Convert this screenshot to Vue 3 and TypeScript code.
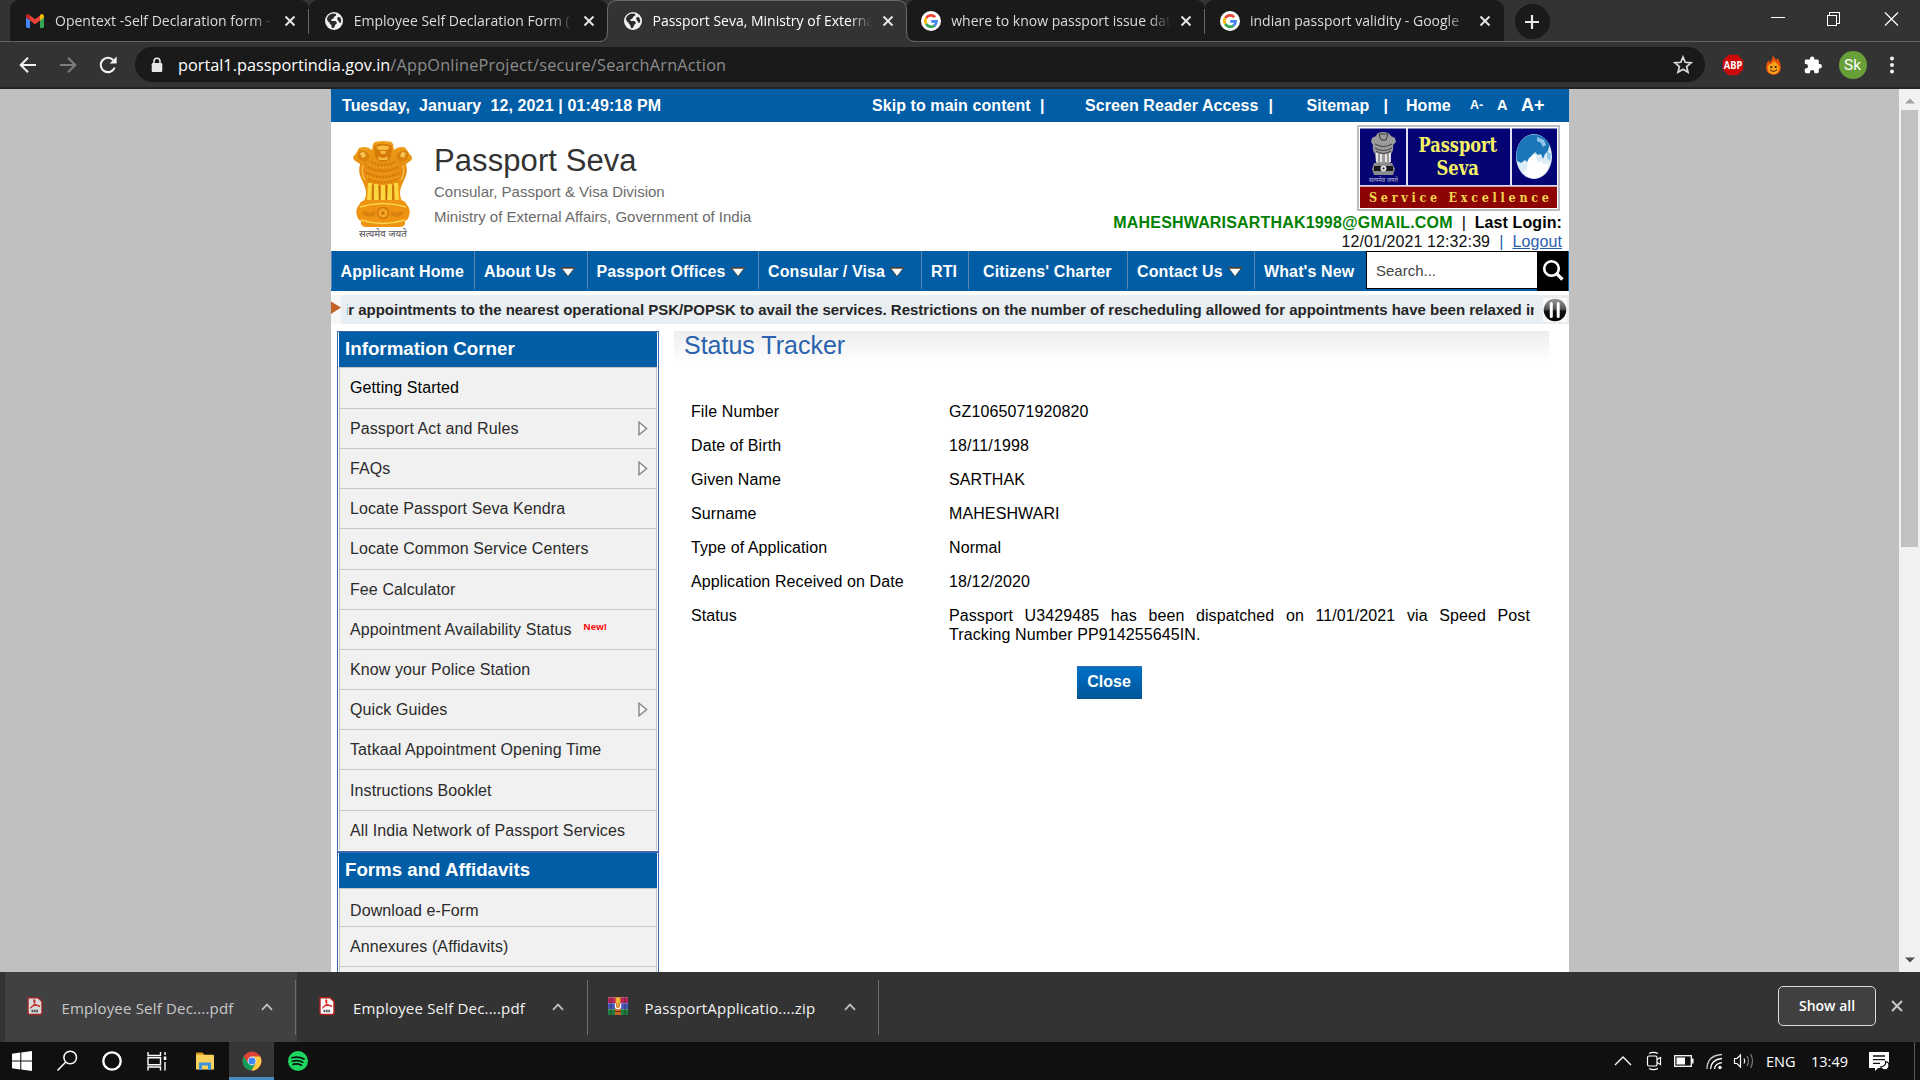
<script setup lang="ts">
interface Tab {
  title: string
  icon: 'gmail' | 'globe' | 'google'
  active?: boolean
  divider?: boolean
}
interface NavItem {
  label: string
  width: number
  pad: number
  menu?: boolean
}
interface SideItem {
  label: string
  arrow?: boolean
  isNew?: boolean
  dark?: boolean
}
interface Download {
  name: string
  kind: 'pdf' | 'zip'
  opened?: boolean
}

const tabs: Tab[] = [
  { title: 'Opentext -Self Declaration form -', icon: 'gmail', divider: true },
  { title: 'Employee Self Declaration Form (', icon: 'globe' },
  { title: 'Passport Seva, Ministry of Externa', icon: 'globe', active: true },
  { title: 'where to know passport issue dat', icon: 'google', divider: true },
  { title: 'indian passport validity - Google', icon: 'google' },
]

const nav: NavItem[] = [
  { label: 'Applicant Home', width: 143, pad: 8.5 },
  { label: 'About Us', width: 113, pad: 9, menu: true },
  { label: 'Passport Offices', width: 171, pad: 8.5, menu: true },
  { label: 'Consular / Visa', width: 163, pad: 9, menu: true },
  { label: 'RTI', width: 47, pad: 9 },
  { label: "Citizens' Charter", width: 159, pad: 14 },
  { label: 'Contact Us', width: 127, pad: 9, menu: true },
  { label: "What's New", width: 112, pad: 9 },
]

const infoItems: SideItem[] = [
  { label: 'Getting Started', dark: true },
  { label: 'Passport Act and Rules', arrow: true },
  { label: 'FAQs', arrow: true },
  { label: 'Locate Passport Seva Kendra' },
  { label: 'Locate Common Service Centers' },
  { label: 'Fee Calculator' },
  { label: 'Appointment Availability Status', isNew: true },
  { label: 'Know your Police Station' },
  { label: 'Quick Guides', arrow: true },
  { label: 'Tatkaal Appointment Opening Time' },
  { label: 'Instructions Booklet' },
  { label: 'All India Network of Passport Services' },
]

const details: [string, string][] = [
  ['File Number', 'GZ1065071920820'],
  ['Date of Birth', '18/11/1998'],
  ['Given Name', 'SARTHAK'],
  ['Surname', 'MAHESHWARI'],
  ['Type of Application', 'Normal'],
  ['Application Received on Date', '18/12/2020'],
]

const downloads: Download[] = [
  { name: 'Employee Self Dec....pdf', kind: 'pdf', opened: true },
  { name: 'Employee Self Dec....pdf', kind: 'pdf' },
  { name: 'PassportApplicatio....zip', kind: 'zip' },
]
</script>

<template>
  <div class="screen">
    <!-- tab strip -->
    <div class="tabstrip">
      <div v-for="(t, i) in tabs" :key="i" class="tab" :class="{ active: t.active, divider: t.divider }">
        <svg v-if="t.active" class="tab-shape" width="316" height="42" viewBox="0 0 316 42">
          <path d="M0 42V41.5Q8.500 41.500 8.500 32V10Q8.500 .5 18 .5H298Q307.500 .5 307.500 10V32Q307.500 41.500 316 41.500V42Z" fill="#333" />
          <path d="M0 41.500Q8.500 41.500 8.500 32V10Q8.500 .5 18 .5H298Q307.500 .5 307.500 10V32Q307.500 41.500 316 41.500" fill="none" stroke="#6b6b6b" />
        </svg>
        <svg v-if="t.icon === 'gmail'" class="tab-icon" width="20" height="20" viewBox="0 0 20 20">
          <path d="M1 5V15.600Q1 17 2.400 17H5V8Z" fill="#4285f4" />
          <path d="M19 5V15.600Q19 17 17.600 17H15V8Z" fill="#34a853" />
          <path d="M5 4.500L10 8.300L15 4.500V9.500L10 13.200L5 9.500Z" fill="#ea4335" />
          <path d="M1 5.500Q1 3 3 3Q3.700 3 5 4.200V9.500L1 6.500Z" fill="#c5221f" />
          <path d="M19 5.500Q19 3 17 3Q16.300 3 15 4.200V9.500L19 6.500Z" fill="#fbbc04" />
        </svg>
        <svg v-else-if="t.icon === 'globe'" class="tab-icon" width="20" height="20" viewBox="0 0 20 20">
          <circle cx="10" cy="10" r="9" fill="#f1f1f1" />
          <path d="M3 7Q4.500 3.800 7.500 2.800L11 2.500Q13 3.200 12 4.800Q10.500 5 9.800 6.500Q9.800 8 7.600 8.200Q6.500 9.800 8 10H11.500Q13.200 11 12.800 12.500Q11 13.200 10.800 15Q10 17.500 8.600 17.200Q7.200 16.400 7.300 14Q5.500 13.400 5.500 11.500Q3 10.500 3 7Z" fill="#2b2b2b" />
          <path d="M14 6Q16 5.500 16.600 7.200L17.300 10Q16.800 12.400 15.600 12Q15 10 13.800 9.400Q12.300 7.500 14 6Z" fill="#2b2b2b" />
        </svg>
        <svg v-else class="tab-icon" width="20" height="20" viewBox="0 0 20 20">
          <circle cx="10" cy="10" r="10" fill="#fff" />
          <g fill="none" stroke-width="2.700">
            <path d="M14.200 6.100A5.700 5.700 0 0 0 5.200 7" stroke="#ea4335" />
            <path d="M5.200 7A5.700 5.700 0 0 0 5.200 13" stroke="#fbbc05" />
            <path d="M5.200 13A5.700 5.700 0 0 0 13.600 14.500" stroke="#34a853" />
            <path d="M13.400 14.700A5.700 5.700 0 0 0 15.600 10.300H10.200" stroke="#4285f4" />
          </g>
        </svg>
        <span class="tab-title">{{ t.title }}</span>
        <svg class="tab-close" width="12" height="12" viewBox="0 0 12 12"><path d="M1.500 1.500L10.500 10.500M10.500 1.500L1.500 10.500" stroke="#e4e4e4" stroke-width="2" /></svg>
      </div>
      <div class="newtab">
        <svg width="14" height="14" viewBox="0 0 14 14"><path d="M7 0V14M0 7H14" stroke="#e8e8e8" stroke-width="2.200" /></svg>
      </div>
      <div class="winctl">
        <svg width="128" height="14" viewBox="0 0 128 14" fill="none" stroke="#fff" shape-rendering="crispEdges">
          <path d="M0 5.500H14" />
          <path d="M56.500 3.500H65.500V13.500H56.500ZM58.500 3V.5H68.500V11.500H66" />
          <path d="M114 .5L127 13.500M127 .5L114 13.500" shape-rendering="auto" stroke-width="1.200" />
        </svg>
      </div>
    </div>

    <!-- toolbar -->
    <div class="toolbar">
      <svg class="tb-back" width="18" height="18" viewBox="0 0 18 18" fill="none" stroke="#f2f2f2" stroke-width="2"><path d="M17 9H2M9 1.700L1.700 9L9 16.300" /></svg>
      <svg class="tb-fwd" width="18" height="18" viewBox="0 0 18 18" fill="none" stroke="#7d7d7d" stroke-width="2"><path d="M1 9H16M9 1.700L16.300 9L9 16.300" /></svg>
      <svg class="tb-reload" width="18" height="18" viewBox="0 0 18 18"><path d="M15.700 11.500A7.200 7.200 0 1 1 14.200 4" fill="none" stroke="#f2f2f2" stroke-width="2.100" /><path d="M17.600 .5V7.500H10.600Z" fill="#f2f2f2" /></svg>
      <div class="omnibox">
        <svg width="12" height="16" viewBox="0 0 12 16"><path d="M3 7V4.200A3 3 0 0 1 9 4.200V7" fill="none" stroke="#e8e8e8" stroke-width="1.600" /><rect x=".7" y="6" width="10.600" height="9" rx="1.200" fill="#e8e8e8" /></svg>
        <span class="url"><b>portal1.passportindia.gov.in</b>/AppOnlineProject/secure/SearchArnAction</span>
        <svg class="star" width="20" height="20" viewBox="0 0 20 20"><path d="M10 2L12.200 7.300L18 7.800L13.600 11.600L15 17.300L10 14.200L5 17.300L6.400 11.600L2 7.800L7.800 7.300Z" fill="none" stroke="#dadada" stroke-width="1.700" /></svg>
      </div>
      <div class="exts">
        <svg width="22" height="22" viewBox="0 0 22 22">
          <path d="M6.500 .8H15.500L21.200 6.500V15.500L15.500 21.200H6.500L.8 15.500V6.500Z" fill="#cc0a0a" />
          <text x="11" y="14.600" text-anchor="middle" textLength="18.500" lengthAdjust="spacingAndGlyphs" font-family="Open Sans, sans-serif" font-weight="700" font-size="10" fill="#fff">ABP</text>
        </svg>
        <svg width="22" height="22" viewBox="0 0 22 22">
          <path d="M10 1Q11 4 13.500 6Q14.500 5 14.500 4Q18 9 18 13.500Q17.500 20.500 10.500 21Q3.500 20.500 3 13.500Q3 9.500 5.500 6Q6 8 7 8.500Q10 5 10 1Z" fill="#e8500a" />
          <path d="M10.500 7Q16 10 16.500 14.500Q15.500 20 10.500 20Q5.500 20 4.500 14.500Q5 10.500 7 10Q9.500 10 10.500 7Z" fill="#f8a21c" />
          <circle cx="8.300" cy="13" r="1.100" fill="#3a1c00" /><circle cx="12.700" cy="13" r="1.100" fill="#3a1c00" />
          <path d="M7 15.700Q10.500 19 14 15.700" fill="none" stroke="#3a1c00" />
        </svg>
        <svg width="20" height="20" viewBox="0 0 20 20"><path d="M7 3.800A2.200 2.200 0 0 1 11.400 3.800V4.600H14.400Q15.800 4.600 15.800 6V9H16.700A2.200 2.200 0 0 1 16.700 13.400H15.800V16.800Q15.800 18.200 14.400 18.200H11.400V17.200A2.200 2.200 0 0 0 7 17.200V18.200H3.200Q1.800 18.200 1.800 16.800V13.400H2.800A2.200 2.200 0 0 0 2.800 9H1.800V6Q1.800 4.600 3.200 4.600H7Z" fill="#fff" /></svg>
        <span class="avatar">Sk</span>
        <svg width="4" height="18" viewBox="0 0 4 18" fill="#f2f2f2"><circle cx="2" cy="2.500" r="2" /><circle cx="2" cy="9" r="2" /><circle cx="2" cy="15.500" r="2" /></svg>
      </div>
    </div>

    <!-- web page -->
    <div class="viewport">
      <div class="page">
        <div class="topbar">
          <span class="date">Tuesday,&nbsp; January&nbsp; 12, 2021 | 01:49:18 PM</span>
          <span>Skip to main content</span><span>|</span>
          <span>Screen Reader Access</span><span>|</span>
          <span>Sitemap</span><span>|</span>
          <span>Home</span>
          <span class="a-small">A-</span><span class="a-mid">A</span><span class="a-big">A+</span>
        </div>

        <header class="header">
          <svg class="emblem" width="64" height="102" viewBox="0 0 64 102">
            <defs>
              <linearGradient id="gold" x1="0" x2="0" y1="0" y2="1"><stop offset="0" stop-color="#f0a01c" /><stop offset=".5" stop-color="#e58a0e" /><stop offset="1" stop-color="#ef9a10" /></linearGradient>
            </defs>
            <path d="M22 4Q23 1 27 1.500L32 1L38 1.500Q41 1 42 4L43 10Q47 6 54 7.500Q57 12 61 17L60.500 20L55 24Q57 32 54 38Q51 44 49.500 49Q48 55 51 61H13Q16 55 14.500 49Q13 44 10 38Q7 32 9 24L3 20L2 17Q6 13 8 8Q16 5 21 10Z" fill="url(#gold)" />
            <path d="M23 6Q32 1 41 6L40 16Q37 22 32 22Q27 22 24 16Z" fill="#d67a0a" />
            <path d="M25 7Q32 4 39 7L36 10H28ZM29 11H35L34 14H30ZM27 16Q32 20 37 16L36 20H28Z" fill="#f7bb40" />
            <path d="M7 12Q12 9 17 13Q20 17 16 21Q10 22 7 18ZM57 12Q52 9 47 13Q44 17 48 21Q54 22 57 18Z" fill="#d9820f" />
            <path d="M9 13L13 12L15 16L11 18ZM55 13L51 12L49 16L53 18Z" fill="#f7c556" />
            <path d="M20 22Q32 28 44 22M17 27Q32 35 47 27M16 33Q32 41 48 33M17 39Q32 46 47 39" fill="none" stroke="#cf760a" stroke-width="1.500" stroke-dasharray="2 1.200" />
            <path d="M18 24.500Q32 31 46 24.500M16 30Q32 38 48 30M16 36Q32 43.500 48 36" fill="none" stroke="#f9b63c" stroke-width="1" stroke-dasharray="1.500 2" />
            <path d="M12 25Q10 33 14 40M52 25Q54 33 50 40" fill="none" stroke="#f8bd4a" stroke-width="1.500" />
            <path d="M17 43H21L20 61H16ZM23 44H27L28 61H23ZM30 45H34V61H30ZM37 44H41L41 61H36ZM43 43H47L48 61H44Z" fill="#fbd63c" />
            <path d="M22 45V60M28.500 46V60M35.500 46V60M42 45V60" stroke="#b8640a" stroke-width="1.200" />
            <path d="M8 65Q10 60 16 60H48Q54 60 56 65Q60 69 58 76Q57 80 54 81V84Q53 87 48 87H16Q11 87 10 84V81Q7 80 6 76Q4 69 8 65Z" fill="#ee9412" />
            <path d="M9 67Q32 60 55 67M10 80Q32 87 54 80" fill="none" stroke="#fbd650" stroke-width="1.500" />
            <circle cx="32" cy="73" r="5.500" fill="#f3a424" stroke="#cf760a" stroke-width="1.500" /><circle cx="32" cy="73" r="1.600" fill="#c46a05" />
            <path d="M11 74Q14 69 17 73L24 71V76L17 77ZM53 74Q50 69 47 73L40 71V76L47 77Z" fill="#d9820f" />
            <text x="32" y="97" text-anchor="middle" textLength="48" lengthAdjust="spacingAndGlyphs" font-family="Noto Sans, Noto Sans Devanagari, sans-serif" font-size="10" font-weight="500" fill="#666">सत्यमेव जयते</text>
          </svg>
          <div class="brand">
            <h1>Passport Seva</h1>
            <p>Consular, Passport &amp; Visa Division</p>
            <p>Ministry of External Affairs, Government of India</p>
          </div>
          <div class="account">
            <svg class="logo" width="204" height="87" viewBox="0 0 204 87">
              <rect x="1" y="1" width="201" height="84" fill="#fff" stroke="#bdbdc4" stroke-width="2" />
              <rect x="3" y="3.500" width="46" height="56.500" fill="#040475" /><rect x="51" y="3.500" width="102" height="56.500" fill="#040475" /><rect x="155" y="3.500" width="45" height="56.500" fill="#040475" />
              <rect x="3" y="61.500" width="197" height="21.500" fill="#8e0303" />
              <path d="M49.900 3.500V60M153.900 3.500V60M3 60.800H200" stroke="#c9c9e8" stroke-width="1.200" />
              <path d="M19 11Q20 7 26 7Q32 7 34 11L38 13L39 17L36 20Q37 25 34 29L33 38H19L18 29Q15 25 16 20L14 17L15 13Z" fill="#9b9b9b" />
              <path d="M22 9H31L29 15H24ZM18 19Q26 24 35 19M18 23Q26 28 35 23M19 26Q26 31 34 26" fill="none" stroke="#3d3d44" />
              <path d="M20 28V37M24 29V37M29 29V37M33 28V37" stroke="#eee" stroke-width="1.800" />
              <path d="M17 38H35L38 44L36 50H17L15 44Z" fill="#8a8a8a" /><path d="M17 41H36V46H17Z" fill="#16161c" /><circle cx="26.500" cy="43.500" r="3" fill="#ddd" /><circle cx="26.500" cy="43.500" r="1" fill="#222" />
              <text x="12" y="57" textLength="29" lengthAdjust="spacingAndGlyphs" font-family="Noto Sans, Noto Sans Devanagari, sans-serif" font-size="6" fill="#b5b5cf">सत्यमेव जयते</text>
              <text x="61.500" y="27" textLength="78.500" lengthAdjust="spacingAndGlyphs" class="logo-name">Passport</text>
              <text x="79.500" y="50" textLength="42.500" lengthAdjust="spacingAndGlyphs" class="logo-name">Seva</text>
              <ellipse cx="177" cy="31.500" rx="18" ry="22.500" fill="#dcedf8" />
              <path d="M162 19Q167 9.500 178 9.500Q188 10.500 192.500 20L191 26L188 29L186 34L184 29L181 30L178 27L176 30L172 33L170 37L168 35L164 38L160 36Q158 27 162 19Z" fill="#1c77b8" />
              <path d="M176 29L179 31L181 38L184 36L187 40L190 38L192 41Q187 53 177 53.500Q170 53 166 47L170 44L171 36Z" fill="#fff" />
              <path d="M180 12L187 15L189 20L186 22L184 18L180 16ZM190 26L194 29L193 36L190 33Z" fill="#8fc4e6" />
              <text x="12" y="76.700" textLength="180" class="logo-tag">Service Excellence</text>
            </svg>
            <div class="login-1"><b class="mail">MAHESHWARISARTHAK1998@GMAIL.COM</b>&nbsp; | &nbsp;<b class="last-login">Last Login:</b></div>
            <div class="login-2">12/01/2021 12:32:39&nbsp; <i>|</i> &nbsp;<u>Logout</u></div>
          </div>
        </header>

        <nav class="nav">
          <div v-for="n in nav" :key="n.label" class="nav-item" :style="{ width: n.width + 'px', paddingLeft: n.pad + 'px' }">
            {{ n.label }}
            <svg v-if="n.menu" width="14" height="11" viewBox="0 0 14 11"><path d="M.5 1H13.500L7 9.500Z" fill="#fff" stroke="#4d4433" stroke-width=".9" /><path d="M0 .8H14" stroke="#4a4235" stroke-width="1.400" /></svg>
          </div>
          <div class="search">Search...</div>
          <div class="search-btn">
            <svg width="24" height="24" viewBox="0 0 24 24" fill="none" stroke="#fff"><circle cx="10.500" cy="10.500" r="7.300" stroke-width="2.600" /><path d="M15.800 15.800L21.500 21.500" stroke-width="3.200" /></svg>
          </div>
        </nav>

        <div class="ticker">
          <svg width="10" height="29" viewBox="0 0 10 29"><path d="M0 6.500L10 12.500L0 19Z" fill="#c4622a" /></svg>
          <div class="ticker-box">
            <div class="ticker-clip"><span>ir appointments to the nearest operational PSK/POPSK to avail the services. Restrictions on the number of rescheduling allowed for appointments have been relaxed in</span></div>
            <svg width="24" height="24" viewBox="0 0 24 24">
              <defs><linearGradient id="knob" x1="0" x2="0" y1="0" y2="1"><stop offset="0" stop-color="#999" /><stop offset=".45" stop-color="#555" /><stop offset=".55" stop-color="#111" /><stop offset="1" stop-color="#000" /></linearGradient></defs>
              <rect width="24" height="24" fill="#fbfbfb" /><circle cx="12" cy="12" r="11.300" fill="url(#knob)" /><path d="M8.300 5.500V18.500M15.200 5.500V18.500" stroke="#fff" stroke-width="3" stroke-linecap="round" />
            </svg>
          </div>
        </div>

        <div class="body">
          <aside class="side">
            <section class="panel">
              <h2>Information Corner</h2>
              <ul>
                <li v-for="it in infoItems" :key="it.label" :class="{ dark: it.dark }">
                  <span>{{ it.label }}</span><em v-if="it.isNew">New!</em>
                  <svg v-if="it.arrow" class="li-arrow" width="10" height="15" viewBox="0 0 10 15"><path d="M1 1.200L8.600 7.500L1 13.800Z" fill="#fcfcfc" stroke="#858585" stroke-width="1.400" /></svg>
                </li>
              </ul>
            </section>
            <section class="panel">
              <h2 class="forms-title">Forms and Affidavits</h2>
              <ul>
                <li class="short"><span>Download e-Form</span></li>
                <li class="last"><span>Annexures (Affidavits)</span></li>
                <li></li>
              </ul>
            </section>
          </aside>

          <main class="main">
            <h2 class="title">Status Tracker</h2>
            <dl>
              <template v-for="d in details" :key="d[0]"><dt>{{ d[0] }}</dt><dd>{{ d[1] }}</dd></template>
              <dt>Status</dt>
              <dd>
                <span class="full">Passport U3429485 has been dispatched on 11/01/2021 via Speed Post</span>
                Tracking Number PP914255645IN.
              </dd>
            </dl>
            <button class="close" type="button">Close</button>
          </main>
        </div>
      </div>

      <div class="scroll">
        <svg width="10" height="6" viewBox="0 0 10 6"><path d="M0 5.500L5 .5L10 5.500Z" fill="#a3a3a3" /></svg>
        <div class="thumb"></div>
        <svg width="10" height="6" viewBox="0 0 10 6"><path d="M0 .5H10L5 5.500Z" fill="#505050" /></svg>
      </div>
    </div>

    <!-- download shelf -->
    <div class="shelf">
      <div v-for="(d, i) in downloads" :key="i" class="dl" :class="{ opened: d.opened }">
        <svg v-if="d.kind === 'pdf'" class="dl-icon" width="20" height="20" viewBox="0 0 20 20">
          <path d="M3 1.700H13L17 5.500V16.500Q17 18.500 15 18.500H5Q3 18.500 3 16.500Z" fill="#fff" stroke="#b3201c" stroke-width="1.400" />
          <path d="M6 11.500Q10.500 8.500 9.700 4.500Q9 3 8.700 5Q9.500 9 14.500 10.500Q15 9 10 9.500Q6.500 10 6 11.500Z" fill="none" stroke="#e02a22" stroke-width="1.200" />
          <path d="M6.500 15H13.500" stroke="#555" stroke-width="2.400" stroke-dasharray="1.800 .6" />
        </svg>
        <svg v-else class="dl-icon" width="20" height="20" viewBox="0 0 20 20">
          <rect y="1" width="20" height="6" fill="#b5265f" /><rect y="7" width="20" height="6" fill="#4a55b8" /><rect y="13" width="20" height="6" fill="#1d7d3c" />
          <path d="M0 1.500H20M0 7.500H20M0 13.500H20" stroke="#fff" stroke-opacity=".25" />
          <path d="M3 1V19M17 1V19" stroke="#222" stroke-opacity=".5" />
          <rect x="7" y="1" width="6" height="18" fill="#c9662a" /><rect x="8" y="1.500" width="4" height="6" fill="#f0b73a" />
          <path d="M7.500 7.500V11.500Q10 14 12.500 11.500V7.500" fill="none" stroke="#fff" stroke-width="1.300" /><path d="M9.300 8V11.500H10.700V8" fill="#e8c33a" /><path d="M7 15.500H13" stroke="#6b2b10" />
        </svg>
        <span>{{ d.name }}</span>
        <svg class="dl-caret" width="12" height="8" viewBox="0 0 12 8"><path d="M1 6.800L6 1.600L11 6.800" fill="none" stroke="#c3c3c3" stroke-width="1.700" /></svg>
      </div>
      <div class="showall">Show all</div>
      <svg class="shelf-x" width="12" height="12" viewBox="0 0 12 12"><path d="M1 1L11 11M11 1L1 11" stroke="#c8c8c8" stroke-width="2" /></svg>
    </div>

    <!-- taskbar -->
    <div class="taskbar">
      <div class="cell start"><svg width="20" height="20" viewBox="0 0 20 20" fill="#fff"><path d="M0 2.800L8.300 1.600V9.500H0ZM9.300 1.500L20 0V9.500H9.300ZM0 10.500H8.300V18.400L0 17.200ZM9.300 10.500H20V20L9.300 18.500Z" /></svg></div>
      <div class="cell"><svg width="22" height="22" viewBox="0 0 22 22" fill="none" stroke="#fff" stroke-width="1.500"><circle cx="14.200" cy="7.500" r="6.300" /><path d="M9.800 12L1.500 20.500" /></svg></div>
      <div class="cell"><svg width="22" height="22" viewBox="0 0 22 22"><circle cx="11" cy="11" r="8.700" fill="none" stroke="#fff" stroke-width="2.300" /></svg></div>
      <div class="cell"><svg width="22" height="22" viewBox="0 0 22 22" fill="none" stroke="#fff" stroke-width="1.400"><path d="M2 2V5.500H14.500V2M2 20.500V17H14.500V20.500M2 7.700H14.500V14.800H2ZM19 2V5M19 12V20.500" /><path d="M19 6.500V10" stroke-width="2.600" /></svg></div>
      <div class="cell shift"><svg width="20" height="20" viewBox="0 0 20 20"><path d="M1 2.500Q1 1.500 2 1.500H7.500L9.500 4H1Z" fill="#d99a1c" /><path d="M1 3.800H18Q19 3.800 19 5V18.500H1Z" fill="#fcd15b" /><path d="M4 19V11.500H16V19H13V14.500H7V19Z" fill="#3d92d8" /></svg></div>
      <div class="cell current"><svg width="20" height="20" viewBox="0 0 20 20">
        <circle cx="10" cy="10" r="9.500" fill="#db4437" /><path d="M1.800 5.200A9.500 9.500 0 0 0 9.500 19.500L13.800 12.200L6.200 12.200Z" fill="#0f9d58" /><path d="M18.200 5.500H10L13.900 12.200L9.500 19.500A9.500 9.500 0 0 0 18.200 5.500Z" fill="#ffcd40" /><circle cx="10" cy="10" r="4.400" fill="#f1f1f1" /><circle cx="10" cy="10" r="3.500" fill="#4285f4" />
      </svg></div>
      <div class="cell spot"><svg width="22" height="22" viewBox="0 0 22 22"><circle cx="11" cy="11" r="10" fill="#1ed760" /><path d="M5 7.800Q11.500 6 17 9M5.500 11.200Q11 9.800 15.800 12.200M6 14.300Q10.500 13.300 14.500 15.200" fill="none" stroke="#101010" stroke-width="1.700" stroke-linecap="round" /></svg></div>
      <div class="tray">
        <svg width="18" height="10" viewBox="0 0 18 10" fill="none" stroke="#fff" stroke-width="1.300"><path d="M1 9L9 1L17 9" /></svg>
        <svg class="t-cam" width="16" height="20" viewBox="0 0 16 20" fill="none" stroke="#fff" stroke-width="1.200"><rect x="1.500" y="5" width="9.500" height="10" rx="1.500" /><path d="M11 8.500L14.500 6.500V13.500L11 11.500M3 2.500Q7.500 .2 12 2.500M3 17.500Q7.500 19.800 12 17.500" /></svg>
        <svg class="t-bat" width="20" height="12" viewBox="0 0 20 12"><rect x=".7" y=".7" width="16.600" height="10.600" fill="none" stroke="#fff" stroke-width="1.300" /><rect x="2.500" y="2.500" width="8.500" height="7" fill="#fff" /><path d="M18.800 3.500V8.500" stroke="#fff" stroke-width="1.500" /></svg>
        <svg class="t-wifi" width="17" height="17" viewBox="0 0 17 17" fill="none" stroke="#fff" stroke-width="1.300"><path d="M1 16Q1 2.500 16 1.500" stroke-opacity=".75" /><path d="M4.500 16Q5 6.500 16 5.500" /><path d="M8.500 16Q9 10.500 16 9.700" /><circle cx="14" cy="14.500" r="1.700" fill="#fff" stroke="none" /></svg>
        <svg class="t-vol" width="22" height="18" viewBox="0 0 22 18" fill="none" stroke="#fff" stroke-width="1.200"><path d="M1.500 6.500H4L7.500 3V15L4 11.500H1.500Z" /><path d="M11 6.500Q12.500 9 11 11.500" /><path d="M14 4Q17 9 14 14M17.500 2Q21.500 9 17.500 16" stroke-opacity=".45" /></svg>
        <span class="lang">ENG</span>
        <span class="clock">13:49</span>
        <svg class="t-note" width="21" height="21" viewBox="0 0 21 21"><path d="M0 1H20V17H9L6 20V17H0Z" fill="#fff" /><path d="M4 5H16M4 8.700H16M4 12.300H11" stroke="#101010" stroke-width="1.300" /><path d="M16.500 10.500Q17.500 15 11.500 16Q14 20 18 18.500Q21.500 15.500 19 11.500Z" fill="#fff" stroke="#101010" stroke-width="1.200" /></svg>
        <div class="peek"></div>
      </div>
    </div>
  </div>
</template>

<style>
html,
body {
  margin: 0;
  background: #101010;
  overflow: hidden;
}
</style>

<style scoped>
* {
  box-sizing: border-box;
}
svg {
  display: block;
  flex: none;
}
.screen {
  width: 1920px;
  height: 1080px;
  display: flex;
  flex-direction: column;
  overflow: hidden;
  font-family: "Liberation Sans", Arial, sans-serif;
}

/* tab strip */
.tabstrip {
  display: flex;
  height: 42px;
  padding-left: 10px;
  background: #333;
  border-bottom: 1px solid #626262;
  font-family: "Open Sans", "Noto Sans", sans-serif;
}
.tab {
  position: relative;
  display: flex;
  align-items: center;
  width: 298.750px;
  height: 41px;
  padding: 0 13px 7px 15px;
  background: #1a1a1a;
  border-radius: 9px 9px 0 0;
}
.tab.active {
  background: none;
  z-index: 1;
}
.tab-shape {
  position: absolute;
  left: -9px;
  top: 0;
}
.tab.divider::after {
  content: "";
  position: absolute;
  right: 0;
  top: 9px;
  width: 1px;
  height: 25px;
  background: #666;
}
.tab-icon {
  position: relative;
  margin-top: 8px;
}
.tab-title {
  position: relative;
  width: 222px;
  margin: 7px 0 0 10px;
  white-space: nowrap;
  font-size: 14px;
  line-height: 22px;
  color: #dcdcdc;
  -webkit-mask-image: linear-gradient(90deg, #000 89%, transparent 99%);
  mask-image: linear-gradient(90deg, #000 89%, transparent 99%);
}
.tab.active .tab-title {
  color: #fff;
}
.tab-close {
  position: relative;
  margin: 7px 0 0 7.500px;
}
.newtab {
  display: flex;
  align-items: center;
  justify-content: center;
  width: 35px;
  height: 35px;
  margin: 4px 0 0 11px;
  border-radius: 50%;
  background: #1a1a1a;
}
.winctl {
  margin: 12px 0 0 221px;
}

/* toolbar */
.toolbar {
  display: flex;
  align-items: center;
  height: 47px;
  padding: 0 0 0 19px;
  background: #333;
  border-bottom: 2px solid #242424;
}
.tb-fwd {
  margin-left: 22px;
}
.tb-reload {
  margin-left: 22px;
}
.omnibox {
  display: flex;
  align-items: center;
  width: 1570px;
  height: 35px;
  margin-left: 18px;
  padding: 0 12px 0 16px;
  border-radius: 18px;
  background: #1a1a1a;
}
.url {
  flex: 1;
  margin: 0 0 0 15px;
  font: 16.300px/24px "Open Sans", "Noto Sans", sans-serif;
  letter-spacing: 0.200px;
  color: #8c8c8c;
}
.url b {
  font-weight: 400;
  letter-spacing: 0;
  color: #fff;
}
.exts {
  display: grid;
  grid-template-columns: 41px 40px 36px 51px 10px;
  align-items: center;
  margin-left: 16.500px;
}
.avatar {
  width: 28px;
  height: 28px;
  border-radius: 50%;
  background: #689f38;
  color: #fff;
  font: 15.500px/28px Roboto, sans-serif;
  text-align: center;
}

/* page */
.viewport {
  display: flex;
  height: 883px;
  background: #c0c0c0;
  overflow: hidden;
}
.page {
  width: 1238px;
  height: 883px;
  margin-left: 331px;
  background: #fff;
  overflow: hidden;
}
.topbar {
  display: grid;
  grid-template-columns: 530px 168px 45px 183.500px 38px 77px 22.500px 64px 27px 24px 40px;
  height: 33px;
  padding-left: 11px;
  background: #005da6;
  color: #fff;
  font-size: 16px;
  font-weight: 700;
  line-height: 33px;
  letter-spacing: 0.070px;
  white-space: nowrap;
}
.date {
  letter-spacing: 0.120px;
}
.a-small {
  font-size: 12.500px;
}
.a-mid {
  font-size: 14.500px;
}
.a-big {
  font-size: 18px;
  line-height: 32px;
}
.header {
  display: flex;
  height: 129px;
}
.emblem {
  margin: 18px 0 0 20px;
}
.brand {
  width: 479px;
  margin-left: 19px;
}
.brand h1 {
  margin: 21px 0 1px;
  font-size: 31px;
  font-weight: 400;
  line-height: 36px;
  letter-spacing: 0.080px;
  color: #333;
}
.brand p {
  margin: 0;
  padding-top: 1px;
  font-size: 15px;
  line-height: 24px;
  color: #6b6b6b;
}
.brand h1 + p {
  padding-top: 0;
}
.account {
  flex: 1;
  margin-right: 7px;
  text-align: right;
  font-size: 16px;
  line-height: 19px;
  white-space: nowrap;
}
.logo {
  margin: 3px 1px 0 auto;
}
.logo-name {
  font-family: "DejaVu Serif Condensed", "DejaVu Serif", serif;
  font-weight: 700;
  font-size: 21px;
  fill: #f6f264;
}
.logo-tag {
  font-family: "DejaVu Serif Condensed", "DejaVu Serif", serif;
  font-weight: 700;
  font-size: 12.500px;
  fill: #f3d64e;
}
.mail {
  color: #008000;
  letter-spacing: 0.180px;
}
.last-login {
  letter-spacing: 0.100px;
}
.login-1 {
  margin-top: 1px;
}
.login-2 {
  color: #111;
  letter-spacing: 0.090px;
}
.login-2 i {
  font-style: normal;
  color: #2a5db0;
}
.login-2 u {
  color: #2a5db0;
}
.nav {
  display: flex;
  height: 40px;
  background: #005da6;
}
.nav-item {
  display: flex;
  align-items: center;
  gap: 5px;
  height: 38px;
  border-left: 1px solid #5f86b4;
  color: #fff;
  font-size: 16px;
  font-weight: 700;
  line-height: 18px;
  letter-spacing: 0.120px;
  white-space: nowrap;
  padding-top: 3px;
}
.nav-item svg {
  margin-top: 2px;
}
.search {
  width: 171px;
  height: 38px;
  padding-left: 9px;
  background: #fff;
  border: 1px solid #000;
  border-right: 0;
  font-size: 15px;
  line-height: 38px;
  color: #444;
}
.search-btn {
  width: 31px;
  height: 40px;
  padding: 7px 0 0 4px;
  background: #000;
}
.ticker {
  display: flex;
  height: 29px;
  margin-top: 4px;
  background: #f7f7f7;
}
.ticker-box {
  display: flex;
  align-items: center;
  flex: 1;
  background: #e9eef2;
}
.ticker-clip {
  display: flex;
  width: 1187px;
  margin: 0 9px 0 6px;
  overflow: hidden;
  white-space: nowrap;
  font-size: 15px;
  font-weight: 700;
  line-height: 29px;
  color: #262626;
}
.ticker-clip span {
  margin-left: -3px;
}
.body {
  display: flex;
  margin-top: 7px;
}
.side {
  width: 322px;
  margin-left: 6px;
}
.panel {
  padding: 0 1px;
  border: 1px solid #3f67ad;
}
.panel h2 {
  height: 35px;
  margin: 0;
  padding-left: 6px;
  background: #005da6;
  color: #fff;
  font-size: 18.750px;
  line-height: 34px;
}
.panel h2.forms-title {
  font-size: 18.700px;
}
.panel ul {
  margin: 0 0 1px;
  padding: 0;
  list-style: none;
}
.panel li {
  display: flex;
  align-items: center;
  height: 40.200px;
  padding: 1px 8px 0 10px;
  border: 1px solid #c6c6c6;
  border-bottom: 0;
  background: #f1f1f1;
  font-size: 16px;
  line-height: 20px;
  letter-spacing: 0.100px;
  color: #2b2b2b;
}
.panel li.dark {
  height: 40.800px;
  color: #000;
}
.panel li em {
  margin: 0 0 6px 12px;
  font: 700 9.700px/10px "Liberation Sans", Arial, sans-serif;
  color: #f00;
}
.li-arrow {
  margin: -1px 0 0 auto;
}
.panel li.short {
  height: 38px;
  padding-top: 7px;
}
.panel li.last {
  height: 40px;
}
.main {
  width: 875px;
  margin-left: 15px;
}
.title {
  height: 31px;
  margin: 0;
  padding-left: 10px;
  background: linear-gradient(#ededed, #fff);
  color: #2a62ae;
  font-size: 25px;
  font-weight: 400;
  line-height: 28px;
}
dl {
  display: grid;
  grid-template-columns: 258px 581px;
  row-gap: 15px;
  margin: 40px 0 0 17px;
  font-size: 16px;
  line-height: 19px;
  letter-spacing: 0.100px;
  color: #000;
}
dd {
  margin: 0;
}
.full {
  display: block;
  text-align: justify;
  text-align-last: justify;
}
.close {
  display: block;
  width: 65px;
  height: 33px;
  margin: 22px 0 0 403px;
  padding: 0 1px 2px 0;
  border: 0;
  border-top: 1px solid #3f67ad;
  background: linear-gradient(#0071c8, #005596);
  color: #fff;
  font: 700 16px/30px "Liberation Sans", Arial, sans-serif;
}
.scroll {
  display: flex;
  flex-direction: column;
  align-items: center;
  width: 21px;
  margin-left: auto;
  padding: 9px 0;
  background: #f1f1f1;
}
.thumb {
  width: 17px;
  height: 437px;
  margin: 6px 0 auto;
  background: #c1c1c1;
}

/* download shelf */
.shelf {
  display: flex;
  height: 70px;
  padding-left: 5px;
  background: #333;
  font-family: "Open Sans", "Noto Sans", sans-serif;
}
.dl {
  position: relative;
  display: grid;
  grid-template-columns: 36.500px 199px 12px;
  align-items: center;
  width: 291.500px;
  padding: 1px 0 0 20px;
  font-size: 15px;
  letter-spacing: 0.190px;
  color: #f4f4f4;
  white-space: nowrap;
}
.dl.opened {
  background: #414143;
  color: #c8c8c8;
}
.dl.opened .dl-icon {
  opacity: 0.8;
}
.dl::after {
  content: "";
  position: absolute;
  right: 0.500px;
  top: 8px;
  width: 1px;
  height: 55px;
  background: #6e6e6e;
}
.dl-icon {
  margin-bottom: 4px;
}
.dl-caret {
  margin-bottom: 1px;
}
.showall {
  width: 98px;
  height: 40px;
  margin: 14px 0 0 auto;
  border: 1px solid #dcdcdc;
  border-radius: 5px;
  background: #404040;
  color: #fff;
  font-size: 14px;
  font-weight: 600;
  line-height: 37px;
  text-align: center;
}
.shelf-x {
  margin: 28px 17px 0 15px;
}

/* taskbar */
.taskbar {
  display: flex;
  height: 38px;
  background: #101010;
}
.cell {
  display: flex;
  align-items: center;
  justify-content: center;
  width: 45.400px;
}
.start {
  width: 44px;
}
.shift {
  width: 50px;
}
.current {
  width: 45px;
  margin-left: -1px;
  background: #363636;
  border-bottom: 3px solid #4a8cc0;
  padding-top: 3px;
}
.spot {
  margin-left: 1px;
}
.tray {
  display: flex;
  align-items: center;
  margin-left: auto;
  color: #fff;
  font: 14.500px/20px "Open Sans", "Noto Sans", sans-serif;
}
.t-cam {
  margin-left: 14px;
}
.t-bat {
  margin-left: 12px;
}
.t-wifi {
  margin-left: 12px;
}
.t-vol {
  margin-left: 10px;
}
.lang {
  width: 45px;
  margin: 1px 0 0 11px;
}
.clock {
  width: 58px;
  margin-top: 1px;
}
.peek {
  width: 1px;
  height: 38px;
  margin: 0 5px 0 24px;
  background: #5a5a5a;
}
</style>
